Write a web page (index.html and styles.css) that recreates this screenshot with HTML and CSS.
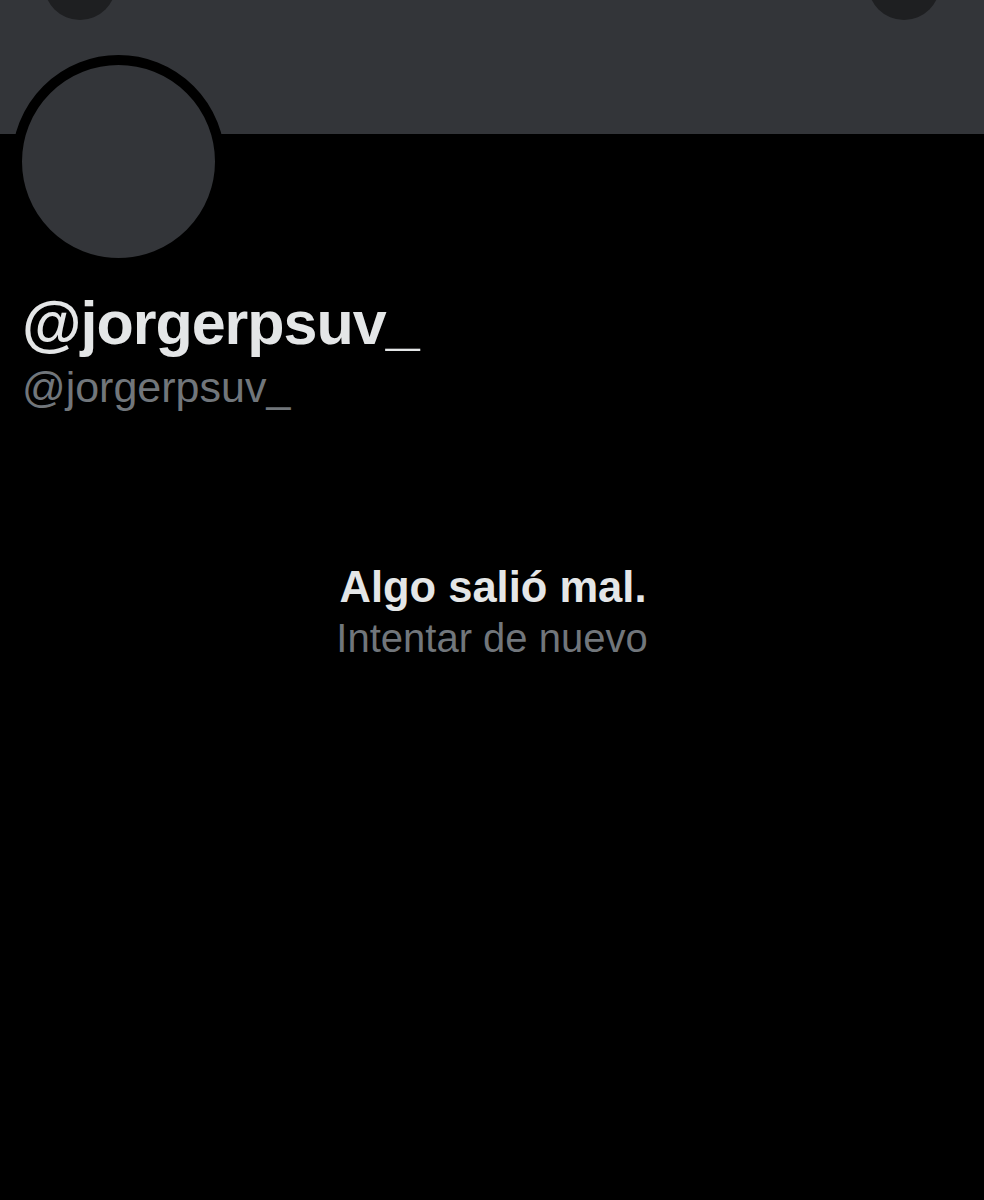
FILE: index.html
```html
<!DOCTYPE html>
<html lang="es">
<head>
<meta charset="utf-8">
<link rel="stylesheet" href="styles.css">
</head>
<body>
<div class="page">
  <div class="banner">
    <div class="btn btn-left"></div>
    <div class="btn btn-right"></div>
  </div>
  <div class="profile">
    <div class="avatar"></div>
    <div class="name">@jorgerpsuv_</div>
    <div class="handle">@jorgerpsuv_</div>
  </div>
  <div class="error">
    <div class="error-title">Algo salió mal.</div>
    <div class="error-retry">Intentar de nuevo</div>
  </div>
</div>
</body>
</html>
```
FILE: styles.css
```css
html, body {
  margin: 0;
  padding: 0;
  background: #000;
}
.page {
  width: 984px;
  height: 1200px;
  background: #000;
  overflow: hidden;
  font-family: "Liberation Sans", Arial, sans-serif;
}
.banner {
  position: relative;
  height: 134px;
  background: #333539;
}
.btn {
  position: absolute;
  top: -52px;
  width: 72px;
  height: 72px;
  border-radius: 50%;
  background: #1e1f21;
}
.btn-left { left: 44px; }
.btn-right { left: 868px; }
.profile {
  padding-left: 12px;
}
.avatar {
  position: relative;
  width: 193px;
  height: 193px;
  margin-top: -79px;
  border: 10px solid #000;
  border-radius: 50%;
  background: #333539;
}
.name {
  margin-top: 20px;
  margin-left: 10px;
  font-size: 61px;
  font-weight: 700;
  color: #e4e6e7;
  line-height: 70px;
  letter-spacing: -1px;
}
.handle {
  margin-left: 10px;
  margin-top: 4px;
  font-size: 43px;
  color: #71767b;
  line-height: 50px;
}
.error {
  margin-top: 150px;
  text-align: center;
}
.error-title {
  font-size: 43.5px;
  font-weight: 700;
  color: #e4e6e7;
  line-height: 50px;
  padding-left: 2px;
}
.error-retry {
  margin-top: 1px;
  font-size: 40px;
  color: #71767b;
  line-height: 50px;
}
```
